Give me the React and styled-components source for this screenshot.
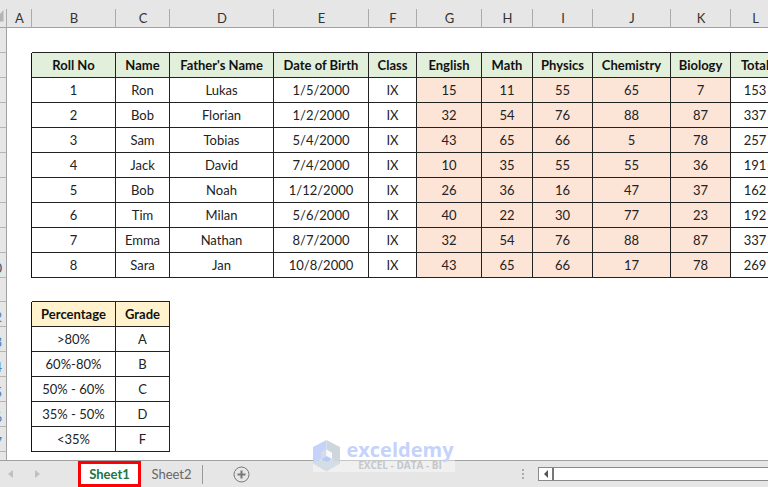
import React from 'react';
import styled, { createGlobalStyle } from 'styled-components';

const columns = [
    { name: 'A', width: 25 },
    { name: 'B', width: 84 },
    { name: 'C', width: 54 },
    { name: 'D', width: 104 },
    { name: 'E', width: 95 },
    { name: 'F', width: 48 },
    { name: 'G', width: 65 },
    { name: 'H', width: 51 },
    { name: 'I', width: 60 },
    { name: 'J', width: 78 },
    { name: 'K', width: 60 },
    { name: 'L', width: 49 },
];

const studentFields = ['Roll No', 'Name', "Father's Name", 'Date of Birth', 'Class', 'English', 'Math', 'Physics', 'Chemistry', 'Biology', 'Total'];

const students = [
    ['1', 'Ron', 'Lukas', '1/5/2000', 'IX', '15', '11', '55', '65', '7', '153'],
    ['2', 'Bob', 'Florian', '1/2/2000', 'IX', '32', '54', '76', '88', '87', '337'],
    ['3', 'Sam', 'Tobias', '5/4/2000', 'IX', '43', '65', '66', '5', '78', '257'],
    ['4', 'Jack', 'David', '7/4/2000', 'IX', '10', '35', '55', '55', '36', '191'],
    ['5', 'Bob', 'Noah', '1/12/2000', 'IX', '26', '36', '16', '47', '37', '162'],
    ['6', 'Tim', 'Milan', '5/6/2000', 'IX', '40', '22', '30', '77', '23', '192'],
    ['7', 'Emma', 'Nathan', '8/7/2000', 'IX', '32', '54', '76', '88', '87', '337'],
    ['8', 'Sara', 'Jan', '10/8/2000', 'IX', '43', '65', '66', '17', '78', '269'],
];

const grades = [
    ['>80%', 'A'],
    ['60%-80%', 'B'],
    ['50% - 60%', 'C'],
    ['35% - 50%', 'D'],
    ['<35%', 'F'],
];

const isMark = (index) => index > 4 && index < 10;

const App = () => {
    return (
        <Workbook>
            <GlobalStyle />
            <SheetArea>
                <SheetTable>
                    <colgroup>
                        <Col $width={7} />
                        {columns.map((col) => <Col key={col.name} $width={col.width} />)}
                    </colgroup>
                    <thead>
                        <tr>
                            <Corner>
                                <svg width="4" height="12" viewBox="0 0 4 12" aria-hidden="true">
                                    <path d="M3.5 0V11.5H0V4Z" fill="#b4b4b4" />
                                </svg>
                            </Corner>
                            {columns.map((col) => <ColumnHead key={col.name} scope="col">{col.name}</ColumnHead>)}
                        </tr>
                    </thead>
                    <tbody>
                        <tr>
                            <RowHead />
                            <BlankCell />
                            <BlankCell colSpan={11} $bottom />
                        </tr>
                        <tr>
                            <RowHead />
                            <BlankCell $right />
                            {studentFields.map((field) => <TitleCell key={field} $fill="#e2efda">{field}</TitleCell>)}
                        </tr>
                        {students.map((student, row) => (
                            <tr key={student[0]}>
                                <RowHead>{row === 7 && <RowNumber>10</RowNumber>}</RowHead>
                                <BlankCell $right />
                                {student.map((value, index) => (
                                    <Cell key={studentFields[index]} $fill={isMark(index) ? '#fce4d6' : '#fff'}>{value}</Cell>
                                ))}
                            </tr>
                        ))}
                        <tr>
                            <RowHead $height={24} />
                            <BlankCell $height={24} />
                            <BlankCell $height={24} colSpan={2} $bottom />
                        </tr>
                        <tr>
                            <RowHead><RowNumber $blue>12</RowNumber></RowHead>
                            <BlankCell $right />
                            <TitleCell $fill="#fff2cc">Percentage</TitleCell>
                            <TitleCell $fill="#fff2cc">Grade</TitleCell>
                        </tr>
                        {grades.map(([range, grade], row) => (
                            <tr key={grade}>
                                <RowHead><RowNumber $blue>{row + 13}</RowNumber></RowHead>
                                <BlankCell $right />
                                <Cell>{range}</Cell>
                                <Cell>{grade}</Cell>
                            </tr>
                        ))}
                    </tbody>
                </SheetTable>
                <Gutter />
                <Watermark>
                    <svg width="27" height="32" viewBox="0 0 27 32" aria-hidden="true">
                        <path d="M13.5 0L0 7V23.5L8 19V13L13.5 9.5Z" fill="#c5d3fb" />
                        <path d="M13.5 0L27 7V23.5L19 19V13L13.5 9.5Z" fill="#ced6dd" />
                        <path d="M0 23.5L8 19L13.5 22L19 19L27 23.5L13.5 31.5Z" fill="#d3dde5" />
                        <path d="M8 13L13.5 9.5V16L8 19Z" fill="#d5dce2" />
                        <path d="M13.5 10L19 13V19L13.5 16Z" fill="#f7f9fc" />
                        <path d="M8 19L13.5 16L19 19L13.5 22Z" fill="#b9cafa" />
                    </svg>
                    <WatermarkText>
                        <WatermarkName>exceldemy</WatermarkName>
                        <WatermarkTag>EXCEL - DATA - BI</WatermarkTag>
                    </WatermarkText>
                </Watermark>
            </SheetArea>
            <TabBar>
                <TabNav>
                    <ArrowButton aria-label="Previous sheet">
                        <svg width="5" height="8" viewBox="0 0 5 8"><path d="M5 0V8L0 4Z" fill="#c0c0c0" /></svg>
                    </ArrowButton>
                    <ArrowButton aria-label="Next sheet">
                        <svg width="5" height="8" viewBox="0 0 5 8"><path d="M0 0V8L5 4Z" fill="#c0c0c0" /></svg>
                    </ArrowButton>
                </TabNav>
                <SheetTab $active>Sheet1</SheetTab>
                <SheetTab>Sheet2</SheetTab>
                <Divider />
                <AddButton aria-label="New sheet">
                    <svg width="17" height="17" viewBox="0 0 17 17" fill="none" stroke="#777">
                        <circle cx="8.5" cy="8.5" r="7.5" />
                        <path d="M8.5 4.5V12.5M4.5 8.5H12.5" strokeWidth="2" />
                    </svg>
                </AddButton>
                <ScrollArea>
                    <svg width="2" height="11" viewBox="0 0 2 11" fill="#aaa" aria-hidden="true">
                        <path d="M0 0H2V2H0ZM0 4H2V6H0ZM0 8H2V10H0Z" />
                    </svg>
                    <ScrollTrack>
                        <ScrollButton aria-label="Scroll left">
                            <svg width="4" height="8" viewBox="0 0 4 8"><path d="M4 0V8L0 4Z" fill="#555" /></svg>
                        </ScrollButton>
                    </ScrollTrack>
                </ScrollArea>
            </TabBar>
        </Workbook>
    );
};

export default App;

const GlobalStyle = createGlobalStyle`
  * {
    box-sizing: border-box;
  }

  body {
    margin: 0;
    background-color: #fff;
    font-family: Lato, 'Liberation Sans', sans-serif;
  }

  button {
    padding: 0;
    border: none;
    background: none;
    font-family: inherit;
  }

  svg {
    display: block;
    flex: none;
  }
`;

const Workbook = styled.div`
  display: flex;
  flex-direction: column;
  min-height: 100vh;
  overflow: hidden;
`;

// Sheet
const SheetArea = styled.main`
  position: relative;
  display: flex;
  flex: 1;
  flex-direction: column;
  background: linear-gradient(#a0a0a0, #a0a0a0) 0 27px / 100% 1px no-repeat,
    linear-gradient(#e6e6e6, #e6e6e6) 0 0 / 100% 27px no-repeat, #fff;
`;

const SheetTable = styled.table`
  width: 780px;
  table-layout: fixed;
  border-collapse: separate;
  border-spacing: 0;
`;

const Col = styled.col`
  width: ${(props) => props.$width}px;
`;

const Corner = styled.td`
  height: 28px;
  padding: 4px 0 0;
  background: linear-gradient(#ababab, #ababab) right 9px / 1px 100% no-repeat;
`;

const ColumnHead = styled.th`
  height: 28px;
  padding: 8px 0 0;
  background: linear-gradient(#ababab, #ababab) right 9px / 1px 100% no-repeat;
  color: #333;
  font-size: 13px;
  font-weight: 400;
  line-height: 19px;
`;

const RowHead = styled.th`
  height: ${(props) => props.$height || 25}px;
  padding: 0;
  overflow: hidden;
  border-right: 1px solid #a0a0a0;
  border-bottom: 1px solid #b4b4b4;
  background-color: #e6e6e6;
  vertical-align: bottom;
`;

const RowNumber = styled.span`
  display: flex;
  justify-content: flex-end;
  padding-right: 4px;
  color: ${(props) => (props.$blue ? '#4a7fb5' : '#35506e')};
  font-size: 13px;
  font-weight: 400;
  line-height: 18px;
`;

const BlankCell = styled.td`
  height: ${(props) => props.$height || 25}px;
  padding: 0;
  border-right: ${(props) => (props.$right ? '1px solid #111' : 'none')};
  border-bottom: ${(props) => (props.$bottom ? '1px solid #222' : 'none')};
`;

const Cell = styled.td`
  height: 25px;
  padding: 0;
  border-right: 1px solid #222;
  border-bottom: 1px solid #222;
  background-color: ${(props) => props.$fill || '#fff'};
  color: #222;
  font-size: 13px;
  line-height: 20px;
  text-align: center;
  white-space: nowrap;
`;

const TitleCell = styled(Cell).attrs({ as: 'th', scope: 'col' })`
  color: #111;
  font-weight: 700;
`;

const Gutter = styled.div`
  flex: 1;
  width: 7px;
  min-height: 8px;
  border-right: 1px solid #a0a0a0;
  background-color: #e6e6e6;
`;

// Logo lying over the sheet and the tab bar
const Watermark = styled.div`
  position: absolute;
  z-index: 1;
  bottom: -12px;
  left: 50%;
  display: flex;
  gap: 5px;
  width: 142px;
  height: 32px;
  margin-left: -71px;
  background-color: rgba(255, 255, 255, 0.4);
  pointer-events: none;
`;

const WatermarkText = styled.div`
  display: flex;
  flex: 1;
  flex-direction: column;
  align-items: center;
  font-family: 'Open Sans', sans-serif;
  font-weight: 700;
`;

const WatermarkName = styled.span`
  color: #c5d3fb;
  font-size: 20px;
  line-height: 20px;
`;

const WatermarkTag = styled.span`
  color: #c3c7cb;
  font-size: 10px;
  line-height: 10px;
`;

// Tab bar
const TabBar = styled.footer`
  display: flex;
  align-items: center;
  height: 27px;
  border-top: 1px solid #a0a0a0;
  background-color: #e6e6e6;
`;

const TabNav = styled.nav`
  display: flex;
  gap: 22px;
  width: 78px;
  padding-left: 8px;
`;

const ArrowButton = styled.button`
  display: flex;
`;

const SheetTab = styled.button`
  width: ${(props) => (props.$active ? 63 : 61)}px;
  height: 26px;
  border: ${(props) => (props.$active ? '3px solid #fb0207' : 'none')};
  background-color: ${(props) => (props.$active ? '#fff' : 'transparent')};
  color: ${(props) => (props.$active ? '#217346' : '#666')};
  font-size: 13px;
  font-weight: ${(props) => (props.$active ? 700 : 400)};
  line-height: 20px;
`;

const Divider = styled.span`
  width: 1px;
  height: 19px;
  background-color: #999;
`;

const AddButton = styled.button`
  display: flex;
  margin-left: 30px;
`;

const ScrollArea = styled.div`
  display: flex;
  align-items: center;
  gap: 14px;
  width: 32%;
  margin-left: auto;
`;

const ScrollTrack = styled.div`
  display: flex;
  flex: 1;
  height: 14px;
  border: 1px solid #8a8a8a;
  border-right: none;
  background-color: #fff;
`;

const ScrollButton = styled.button`
  display: flex;
  align-items: center;
  justify-content: center;
  width: 15px;
  border-right: 2px solid #777;
`;
